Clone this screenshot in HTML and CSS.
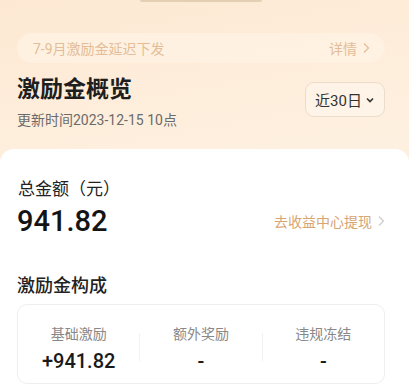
FILE: index.html
```html
<!DOCTYPE html>
<html lang="zh-CN">
<head>
<meta charset="utf-8">
<link rel="stylesheet" href="styles.css">
</head>
<body>
<div class="page">
  <div class="tab"></div>
  <div class="notice">
    <span class="notice-text">7-9月激励金延迟下发</span>
    <span class="notice-link">详情<svg class="chev" width="8" height="12" viewBox="0 0 8 12"><path d="M2 1.5 L6.5 6 L2 10.5" fill="none" stroke="currentColor" stroke-width="1.2"/></svg></span>
  </div>
  <div class="header">
    <div class="titles">
      <div class="title">激励金概览</div>
      <div class="sub">更新时间2023-12-15 10点</div>
    </div>
    <div class="range">近30日<svg class="down" width="10" height="8" viewBox="0 0 10 8"><path d="M2 2.5 L5 5.5 L8 2.5" fill="none" stroke="currentColor" stroke-width="1.6"/></svg></div>
  </div>
  <div class="card">
    <div class="total-label">总金额（元）</div>
    <div class="total-row">
      <span class="total">941.82</span>
      <span class="withdraw">去收益中心提现<svg class="chev" width="8" height="12" viewBox="0 0 8 12"><path d="M2 1.5 L6.5 6 L2 10.5" fill="none" stroke="currentColor" stroke-width="1.2"/></svg></span>
    </div>
    <div class="section">激励金构成</div>
    <div class="breakdown">
      <div class="col"><div class="lbl">基础激励</div><div class="val">+941.82</div></div>
      <div class="divider"></div>
      <div class="col"><div class="lbl">额外奖励</div><div class="val">-</div></div>
      <div class="divider"></div>
      <div class="col"><div class="lbl">违规冻结</div><div class="val">-</div></div>
    </div>
  </div>
</div>
</body>
</html>
```
FILE: styles.css
```css
* { box-sizing: border-box; }
html, body { margin: 0; padding: 0; }
body {
  font-family: Roboto, "Noto Sans CJK SC", sans-serif;
  background: #fff;
  overflow: hidden;
}
.page {
  width: 409px;
  height: 384px;
  background: linear-gradient(170deg, #fde9d3 0%, #fef0e0 45%, #fdeedd 100%);
  display: flex;
  flex-direction: column;
}
.tab {
  margin-left: 140px;
  width: 122px;
  height: 3px;
  background: #e5cfb2;
  border-radius: 0 0 3px 3px;
}
.notice {
  margin: 31px 24px 0 17px;
  height: 40px;
  border-radius: 20px;
  background: rgba(255, 246, 234, 0.55);
  border: 1px solid rgba(255, 240, 222, 0.9);
  display: flex;
  align-items: center;
  justify-content: space-between;
  padding: 0 14px 0 15px;
  font-size: 14px;
  color: #e3bd97;
}
.notice-link, .withdraw {
  display: flex;
  align-items: center;
  gap: 5px;
}
.header {
  margin: 12px 24px 0 17px;
  display: flex;
  justify-content: space-between;
  align-items: flex-start;
}
.title {
  font-size: 23px;
  line-height: 30px;
  font-weight: 700;
  color: #1e1e1e;
}
.sub {
  margin-top: 5px;
  font-size: 14px;
  line-height: 20px;
  color: #6b6b6b;
}
.range {
  margin-top: 7px;
  width: 80px;
  height: 35px;
  border: 1px solid #eedccb;
  border-radius: 9px;
  background: rgba(255, 246, 238, 0.6);
  display: flex;
  align-items: center;
  justify-content: center;
  gap: 3px;
  font-size: 15px;
  color: #333;
}
.card {
  margin-top: 19px;
  flex: 1;
  background: #fff;
  border-radius: 14px 14px 0 0;
  padding: 28px 24px 0 17px;
}
.total-label {
  font-size: 17px;
  line-height: 24px;
  color: #222;
  padding-left: 1px;
}
.total-row {
  margin-top: 2px;
  display: flex;
  align-items: center;
  justify-content: space-between;
}
.total {
  font-size: 29px;
  line-height: 36px;
  font-weight: 500;
  color: #141414;
}
.withdraw {
  font-size: 14px;
  color: #d7a573;
}
.withdraw .chev { color: #ccc; }
.section {
  margin-top: 34px;
  font-size: 18px;
  line-height: 26px;
  font-weight: 500;
  color: #222;
}
.breakdown {
  margin-top: 5px;
  border: 1px solid #eeeeee;
  border-radius: 10px;
  padding-top: 19px;
  display: grid;
  grid-template-columns: 1fr 1px 1fr 1px 1fr;
  height: 80px;
  align-items: start;
}
.col { text-align: center; }
.lbl {
  font-size: 14px;
  line-height: 20px;
  color: #888;
}
.val {
  margin-top: 4px;
  font-size: 20px;
  line-height: 26px;
  font-weight: 500;
  color: #1a1a1a;
}
.divider {
  margin-top: 9px;
  height: 28px;
  background: #f2f2f2;
}
```
